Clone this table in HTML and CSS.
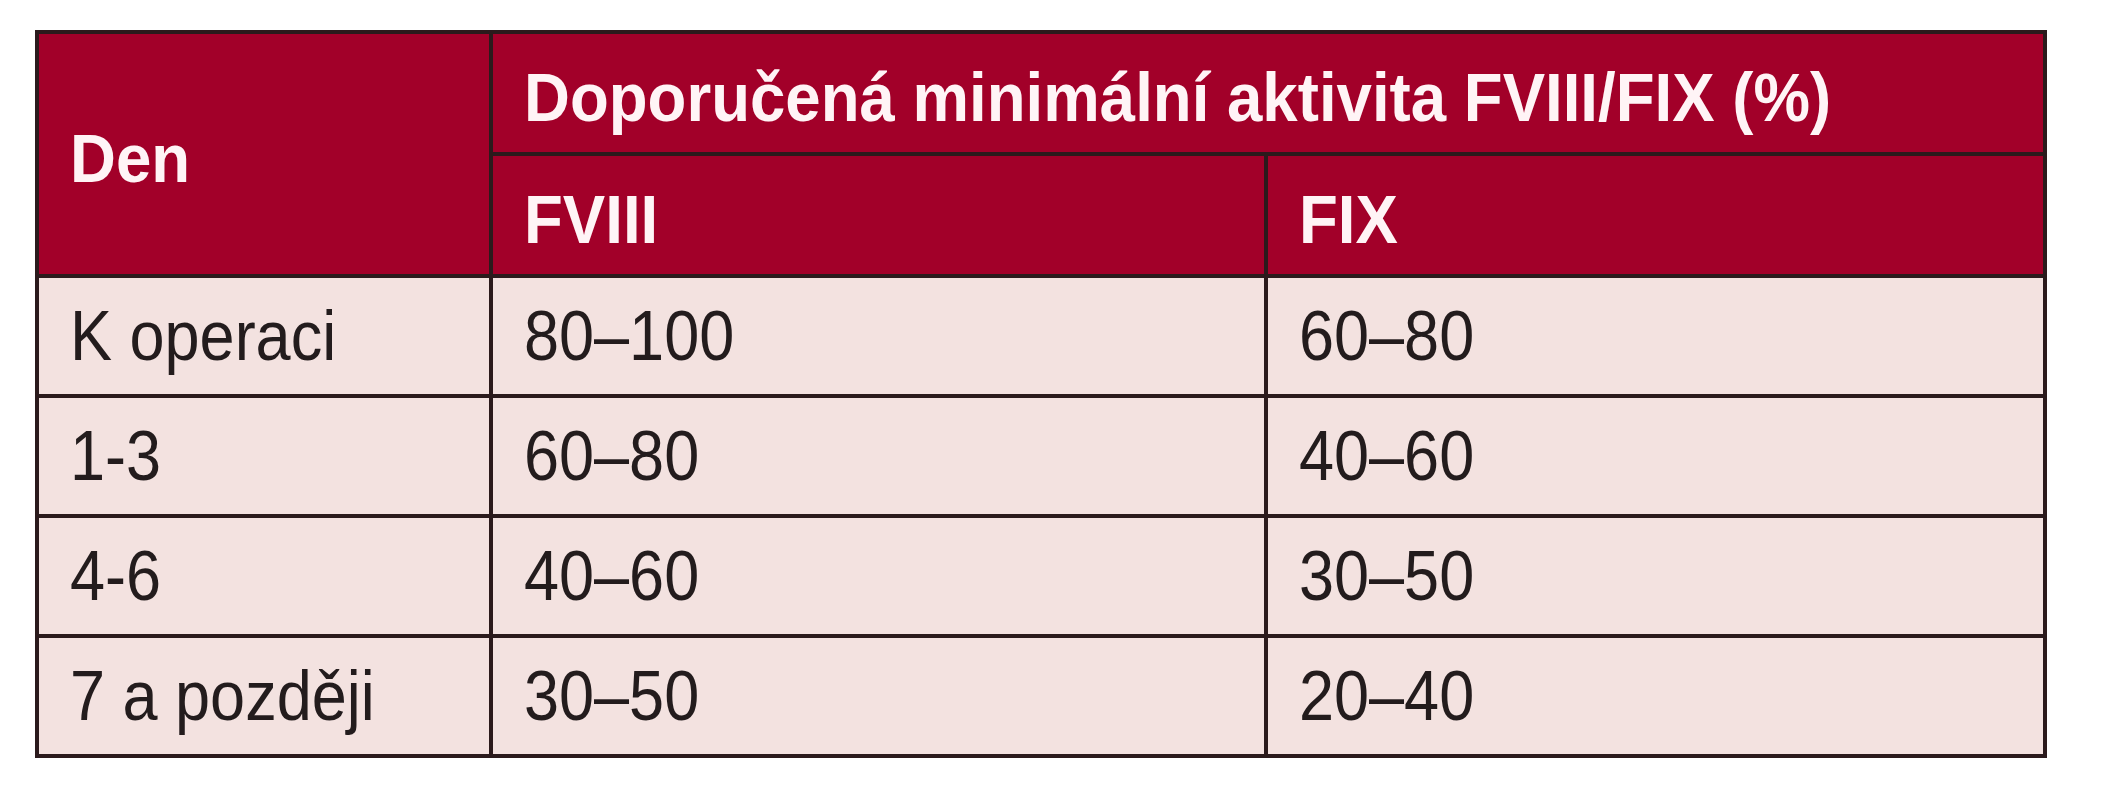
FILE: index.html
```html
<!DOCTYPE html>
<html lang="cs">
<head>
<meta charset="utf-8">
<title>Doporučená minimální aktivita FVIII/FIX</title>
<link rel="stylesheet" href="styles.css">
</head>
<body>
<div class="sheet">
  <div class="grid">
    <div class="cell head den"><span class="txt">Den</span></div>
    <div class="cell head wide"><span class="txt">Doporučená minimální aktivita FVIII/FIX (%)</span></div>
    <div class="cell head"><span class="txt">FVIII</span></div>
    <div class="cell head"><span class="txt">FIX</span></div>

    <div class="cell body"><span class="txt">K operaci</span></div>
    <div class="cell body"><span class="txt">80–100</span></div>
    <div class="cell body"><span class="txt">60–80</span></div>

    <div class="cell body"><span class="txt">1-3</span></div>
    <div class="cell body"><span class="txt">60–80</span></div>
    <div class="cell body"><span class="txt">40–60</span></div>

    <div class="cell body"><span class="txt">4-6</span></div>
    <div class="cell body"><span class="txt">40–60</span></div>
    <div class="cell body"><span class="txt">30–50</span></div>

    <div class="cell body"><span class="txt">7 a později</span></div>
    <div class="cell body"><span class="txt">30–50</span></div>
    <div class="cell body"><span class="txt">20–40</span></div>
  </div>
</div>
</body>
</html>
```
FILE: styles.css
```css
html, body {
  margin: 0;
  padding: 0;
  background: #ffffff;
}

.sheet {
  padding: 30px 0 0 35px;
}

.grid {
  display: grid;
  width: max-content;
  grid-template-columns: 450px 771px 775px;
  grid-template-rows: 118px 118px 116px 116px 116px 116px;
  gap: 4px;
  padding: 4px;
  background: #2b1a1c;
}

.cell {
  display: flex;
  align-items: center;
  padding-left: 31px;
  box-sizing: border-box;
  white-space: nowrap;
  overflow: hidden;
}

.txt {
  display: inline-block;
  transform-origin: left center;
}

.head {
  background: #a20029;
  color: #fff4f6;
  font-family: "Liberation Sans", Arial, sans-serif;
  font-weight: 700;
  font-size: 68px;
  padding-top: 8px;
}

.head .txt {
  transform: scaleX(0.935);
}

.den {
  grid-row: span 2;
}

.wide {
  grid-column: span 2;
}

.body {
  background: #f3e2e0;
  color: #231c1d;
  font-family: "Liberation Sans", Arial, sans-serif;
  font-weight: 400;
  font-size: 70px;
}

.body .txt {
  transform: scaleX(0.9);
}
```
